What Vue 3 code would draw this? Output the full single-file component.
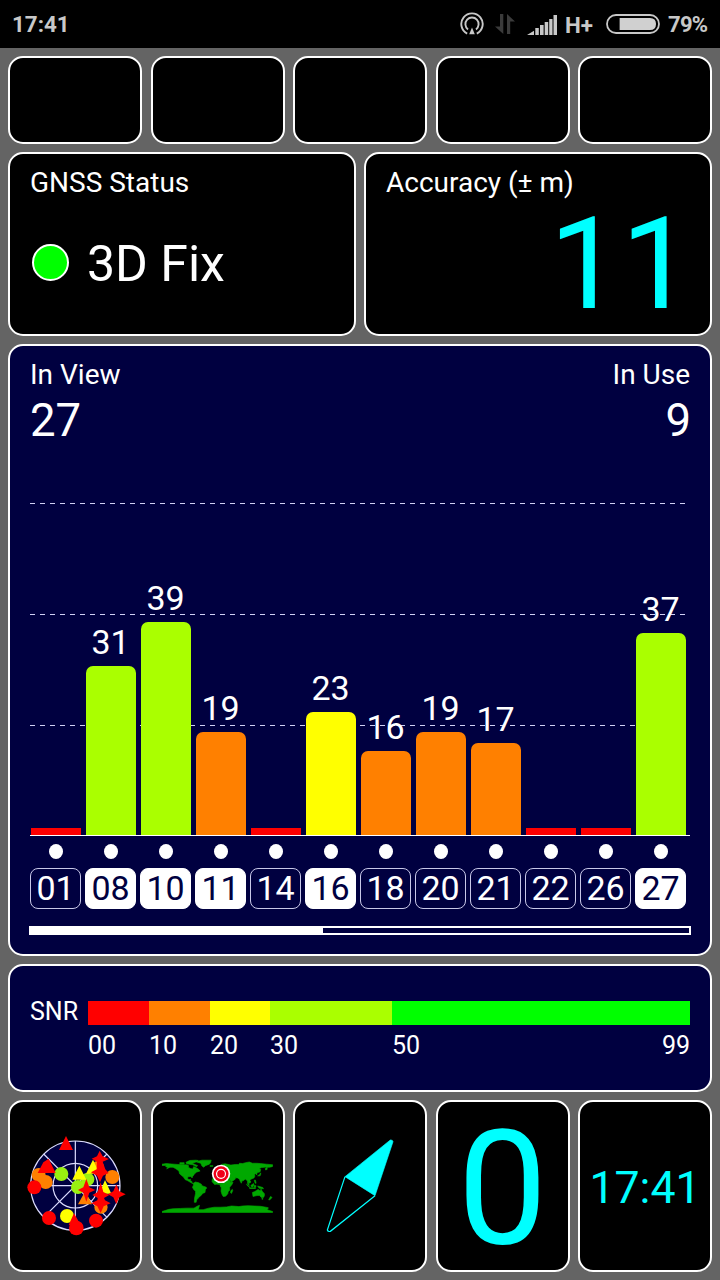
<script setup>
const satellites = [
  { id: '01', h: 7, color: '#ff0000' },
  { id: '08', snr: 31, h: 169, color: '#aaff00', used: true },
  { id: '10', snr: 39, h: 213, color: '#aaff00', used: true },
  { id: '11', snr: 19, h: 103, color: '#ff8000', used: true },
  { id: '14', h: 7, color: '#ff0000' },
  { id: '16', snr: 23, h: 123, color: '#ffff00', used: true },
  { id: '18', snr: 16, h: 84, color: '#ff8000' },
  { id: '20', snr: 19, h: 103, color: '#ff8000' },
  { id: '21', snr: 17, h: 92, color: '#ff8000' },
  { id: '22', h: 7, color: '#ff0000' },
  { id: '26', h: 7, color: '#ff0000' },
  { id: '27', snr: 37, h: 202, color: '#aaff00', used: true }
]

const ranges = [
  { from: '00', w: 61, color: '#ff0000' },
  { from: '10', w: 61, color: '#ff8000' },
  { from: '20', w: 60, color: '#ffff00' },
  { from: '30', w: 122, color: '#aaff00' },
  { from: '50', w: 298, color: '#00ff00', to: '99' }
]
</script>

<template>
  <div class="screen">
    <header class="status">
      <span class="time">17:41</span>
      <svg class="hotspot" width="24" height="24" viewBox="0 0 24 24">
        <g fill="none" stroke="#c8c8c8" stroke-width="1.9">
          <path d="M7.2 21.6A10.7 10.7 0 1 1 16.8 21.6" />
          <path d="M8 17.4A6.6 6.6 0 1 1 16 17.4" />
        </g>
        <path d="M12 15.5L14.8 22.2H9.2Z" fill="#c8c8c8" />
      </svg>
      <svg class="arrows" width="20" height="20" viewBox="0 0 20 20">
        <path d="M5 0H8.3V20L0 12.5H5Z M12 20V0L20 7.6H15.2V20Z" fill="#3b3b3b" />
      </svg>
      <svg class="signal" width="30" height="20" viewBox="0 0 30 20">
        <path d="M0 20L7 15.8V20Z M8.3 13H11.8V20H8.3Z M13 10H16.6V20H13Z M17.7 7H21.2V20H17.7Z M22.2 4H25.5V20H22.2Z M26.5 0H30V20H26.5Z" fill="#c8c8c8" />
      </svg>
      <span class="net">H+</span>
      <svg class="battery" width="54" height="20" viewBox="0 0 54 20">
        <rect x="1" y="1" width="52" height="18" rx="9" fill="none" stroke="#c8c8c8" stroke-width="1.8" />
        <path d="M13.6 4H44Q50 4 50 10T44 16H13.6Z" fill="#d0d0d0" />
      </svg>
      <span class="pct">79%</span>
    </header>

    <main class="board">
      <div class="row five top">
        <div v-for="n in 5" :key="n" class="card"></div>
      </div>

      <div class="row two">
        <section class="card fix">
          <h2 class="title">GNSS Status</h2>
          <div class="fix-line"><i class="led"></i><span>3D Fix</span></div>
        </section>
        <section class="card accuracy">
          <h2 class="title">Accuracy (± m)</h2>
          <div class="big">11</div>
        </section>
      </div>

      <section class="card navy view">
        <div class="counts">
          <div><h2 class="title">In View</h2><div class="num">27</div></div>
          <div class="right"><h2 class="title">In Use</h2><div class="num">9</div></div>
        </div>
        <div class="chart">
          <div class="lines"><i></i><i></i><i></i></div>
          <div v-for="s in satellites" :key="s.id" class="col">
            <span v-if="s.snr" class="val">{{ s.snr }}</span>
            <div class="bar" :class="{ tall: s.snr }" :style="{ height: s.h + 'px', background: s.color }"></div>
          </div>
        </div>
        <div class="ids">
          <div v-for="s in satellites" :key="s.id" class="idcol">
            <i class="dot"></i>
            <span class="chip" :class="{ used: s.used }">{{ s.id }}</span>
          </div>
        </div>
        <div class="progress"><div></div></div>
      </section>

      <section class="card navy snr">
        <span class="snr-label">SNR</span>
        <div class="scale">
          <div v-for="r in ranges" :key="r.from" :style="{ width: r.w + 'px' }">
            <div class="swatch" :style="{ background: r.color }"></div>
            <div class="ticks"><span>{{ r.from }}</span><span v-if="r.to">{{ r.to }}</span></div>
          </div>
        </div>
      </section>

      <div class="row five bottom">
        <div class="card">
          <svg width="110" height="110" viewBox="0 3 330 330">
            <circle cx="166" cy="167" r="134" fill="#000040" />
            <g fill="none" stroke="#dcdcff" stroke-width="3.6">
              <circle cx="166" cy="167" r="134" />
              <circle cx="166" cy="167" r="67" />
              <path d="M166 33V301M32 167H300M71 72L261 262M71 262L261 72" />
            </g>
            <g fill="#ff8000">
              <circle cx="56" cy="135" r="21" /><circle cx="77" cy="156" r="21" />
              <circle cx="277" cy="141" r="21" /><circle cx="243" cy="231" r="20" />
              <circle cx="233" cy="112" r="19" />
            </g>
            <g fill="#99f010">
              <circle cx="124" cy="132" r="21" /><circle cx="203" cy="148" r="20" />
              <circle cx="174" cy="171" r="21" />
            </g>
            <circle cx="141" cy="258" r="21" fill="#ffff00" />
            <g fill="#ff0000">
              <circle cx="43" cy="172" r="21" /><circle cx="87" cy="264" r="21" />
              <circle cx="228" cy="272" r="21" /><circle cx="169" cy="294" r="22" />
              <path d="M138 18L159 60H117Z M86 86L107 129H53L70 97Z M162 250L182 285H146Z" />
            </g>
            <path d="M219 89L239 131H198Z M178 107L199 149H157Z M255 150L274 191H238Z" fill="#ffff00" />
            <path d="M196 183L216 223H174Z" fill="#ff8000" />
            <g fill="#ff0000">
              <path d="M239 62L248 79L267 87L248 95L256 118L266 129L249 137L240 157L231 137L213 127L230 118L231 95L215 86L231 79Z" />
              <path d="M199 147L208 172L226 180L208 188L199 215L190 188L174 180L190 172Z" />
              <path d="M242 157L250 186L268 195L252 204L255 211L272 220L251 229L242 249L232 229L214 220L232 211L233 204L217 195L233 186Z" />
              <path d="M289 163L298 184L317 193L298 202L289 222L280 202L264 193L280 184Z" />
            </g>
          </svg>
        </div>
        <div class="card">
          <svg width="110.7" height="55.4" viewBox="0 0 360 180">
            <g fill="#00a800" stroke="#00a800" stroke-width="2">
              <path d="M0 20L14 18L24 19L40 20L52 21L65 22L80 22L86 24L86 30L92 34L100 36L103 28L108 30L118 36L124 42L112 46L107 50L104 54L99 61L98 65L94 60L84 61L83 68L89 70L93 69L92 74L97 76L97 81L103 82L100 83L92 79L84 74L75 70L70 62L65 58L57 51L55 42L45 35L36 30L26 30L15 35L20 31L12 28L14 24L0 24Z" />
              <path d="M58 15H72V20H58Z M78 14L90 8L110 7L118 8L108 14L98 17L116 25L112 28L100 22L80 19Z M110 12L130 7L160 7L158 15L154 20L141 25L136 30L130 26L126 17Z M156 25H166V27H156Z" />
              <path d="M103 82L108 78L118 80L128 85L130 90L144 95L145 98L141 103L140 112L132 115L128 121L123 125L118 130L113 136L111 144H105L106 130L109 116L109 108L103 102L99 95L102 89Z" />
              <path d="M171 53L171 47L178 47L176 42L184 39L190 36L189 32L194 34L204 34L208 30L202 26L194 30L186 30L186 27L196 20L206 19L220 22L224 23L238 21L250 21L252 17L262 18L272 15L284 13L294 17L308 17L320 18L340 20L360 22V27L358 28L350 30L342 30L342 37L337 39L336 34L343 29L324 31L315 35L321 37L319 45L309 48L308 55L304 51L301 53L302 59L299 65L289 69L286 73L289 78L285 82L280 78L284 89L279 85L278 75L271 68L267 72L260 75L258 82L254 75L252 69L246 65L237 64L239 68L225 78L222 73L214 60L216 54L206 54L203 49L204 54L199 50L193 45L197 51L189 47L182 48L178 54Z" />
              <path d="M174 55L190 53L191 58L200 60L213 59L223 79L231 79L227 87L220 95L220 105L215 110L214 116L207 124L199 125L195 118L192 108L193 97L189 91L189 86L178 85L171 86L163 77L164 68Z" />
              <path d="M229 102L230 106L226 115L223 113L224 106Z M175 40L174 32L178 31L181 39Z M321 53L319 58L311 58L317 54L321 48Z M275 85L285 94V96L277 89Z M289 89L298 83L299 88L295 94L290 93Z M300 89H305V95H300Z M311 91L328 96L330 100L316 98Z M300 72H304L306 82H303Z M285 97H304V99H285Z" />
              <path d="M294 112L302 109L308 105L313 102L317 105L320 107L322 101L326 108L333 116L333 123L330 128L323 128L317 122L309 122L296 125Z M325 131H328V134H325Z M353 125L358 128L351 136H347Z" />
              <path d="M0 174L22 167L36 165L60 164L80 163L104 163L116 156L122 154L120 161L118 168L134 168L152 163L170 160L190 160L210 159L226 156L240 157L250 158L262 156L280 155L300 156L320 157L338 160L346 162L342 168L360 174V177H0Z" />
            </g>
            <circle cx="192" cy="51.5" r="30" fill="#fff" />
            <circle cx="192" cy="51.5" r="24.5" fill="#f00018" />
            <circle cx="192" cy="51.5" r="14.5" fill="none" stroke="#fff" stroke-width="3.8" />
          </svg>
        </div>
        <div class="card">
          <svg width="70" height="100" viewBox="105 138 210 300">
            <path d="M165 260L255 317L309 155Q308 149 301 150Z" fill="#00ffff" stroke="#00ffff" stroke-width="2" />
            <path d="M165 260L112 420Q114 426 121 424L255 317" fill="none" stroke="#00ffff" stroke-width="3.6" />
          </svg>
        </div>
        <div class="card"><span class="speed">0</span></div>
        <div class="card"><span class="clock">17:41</span></div>
      </div>
    </main>
  </div>
</template>

<style>
body { background: #646464; }
</style>

<style scoped>
* { box-sizing: border-box; }
.screen {
  width: 720px;
  height: 1280px;
  overflow: hidden;
  background: #646464;
  color: #fff;
  font-family: Roboto, "Liberation Sans", sans-serif;
}
.status {
  height: 48px;
  background: #000;
  color: #c8c8c8;
  display: flex;
  align-items: center;
  padding: 0 12px;
  font-size: 22.4px;
  font-weight: 700;
  line-height: 48px;
}
.time { flex: 1; }
.arrows { margin-left: 11px; }
.signal { margin: 1px 0 0 12px; }
.net { margin-left: 8px; width: 41px; padding-top: 1px; }
.pct { margin-left: 8px; width: 40px; padding-top: 1px; font-size: 22px; letter-spacing: -0.7px; }
.board { padding: 8px; display: flex; flex-direction: column; gap: 8px; }
.row { display: grid; }
.five { grid-template-columns: repeat(5, 134px); justify-content: space-between; }
.two { grid-template-columns: 1fr 1fr; gap: 8px; height: 184px; }
.top { height: 88px; }
.bottom { height: 172px; }
.card { border: 2px solid #fff; border-radius: 15px; background: #000; min-width: 0; }
.navy { background: #000040; }
.bottom .card { display: flex; align-items: center; justify-content: center; }
.title { margin: 0; font-size: 28px; line-height: 32px; font-weight: 400; }
.fix, .accuracy { padding: 13px 20px 0; }
.accuracy { padding-right: 17px; }
.fix-line { display: flex; align-items: center; gap: 18px; margin-top: 34px; padding-left: 2px; font-size: 50px; line-height: 60px; }
.fix-line span { margin: 1px 0 -1px; }
.led { width: 37px; height: 37px; margin-bottom: 1px; border: 2px solid #fff; border-radius: 50%; background: #00ff00; }
.big { text-align: right; color: #00ffff; font-size: 128px; line-height: 128px; margin-top: 1px; }
.view { height: 612px; padding: 13px 18px 0 20px; }
.counts { display: flex; justify-content: space-between; padding-right: 2px; }
.right { text-align: right; }
.num { font-size: 45.5px; line-height: 56px; margin: 2px 0 -2px; }
.right .num { margin-right: -1px; }
.chart {
  position: relative;
  display: flex;
  align-items: flex-end;
  gap: 5px;
  height: 333px;
  margin: 56px 2px 0 0;
  padding-left: 1px;
  border-bottom: 1px solid #fff;
}
.lines { position: absolute; inset: 0; display: flex; flex-direction: column; gap: 110px; }
.lines i { height: 1px; background: repeating-linear-gradient(90deg, #d0d0f4 0 5px, transparent 5px 10px); margin-right: 3px; }
.col { position: relative; width: 50px; text-align: center; }
.val { display: block; font-size: 34px; line-height: 40px; margin: 0 1px 4px 0; }
.tall { border-radius: 7px 7px 0 0; }
.ids { display: flex; gap: 4px; margin-top: 8px; }
.idcol { width: 51px; display: flex; flex-direction: column; align-items: center; gap: 9px; }
.dot { width: 14px; height: 15px; margin-left: 1px; border-radius: 50%; background: #fff; }
.chip { width: 51px; height: 41px; border: 1px solid #c8c8e8; border-radius: 8px; text-align: center; font-size: 34px; line-height: 39px; }
.chip.used { background: #fff; border-color: #fff; color: #000040; }
.progress { width: 662px; height: 9px; margin: 17px 0 0 -1px; border: 2px solid #fff; }
.progress div { width: 292px; height: 5px; background: #fff; }
.snr { height: 128px; padding: 35px 20px 0; display: flex; font-size: 25px; }
.snr-label { width: 58px; line-height: 22px; }
.scale { display: flex; }
.swatch { height: 24px; }
.ticks { display: flex; justify-content: space-between; line-height: 30px; margin-top: 6px; }
.speed { color: #00ffff; font-size: 160px; line-height: 150px; padding-top: 6px; }
.clock { color: #00ffff; font-size: 44.6px; line-height: 52px; margin: 2px 0 -2px; }
</style>
